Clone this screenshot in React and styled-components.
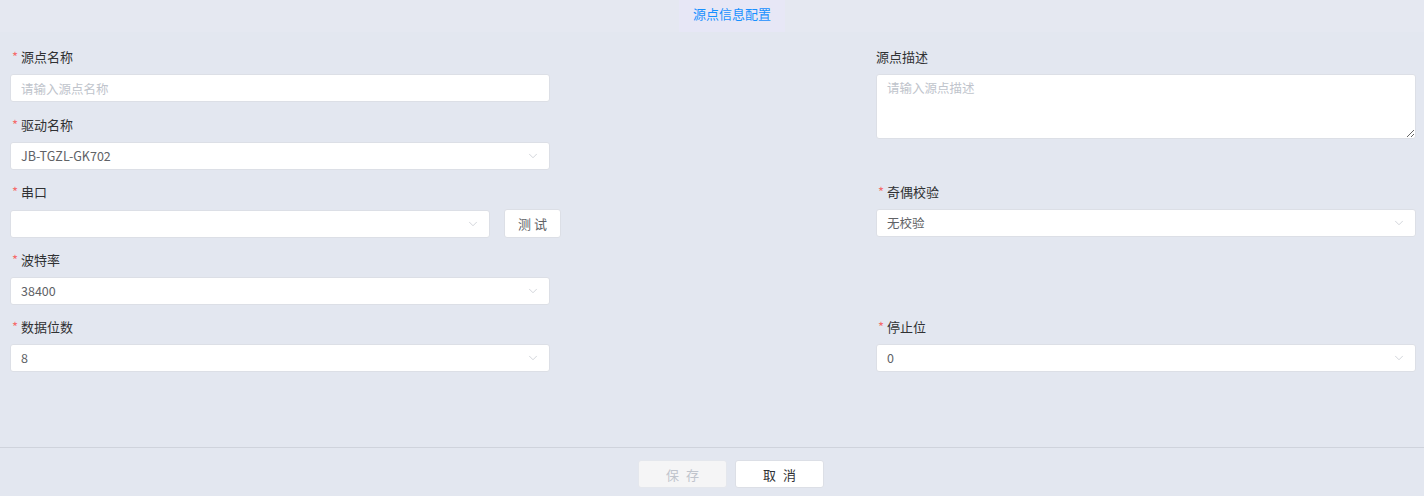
import React from "react";
import styled, { createGlobalStyle } from "styled-components";
import { ChevronDown } from "lucide-react";

const GlobalStyle = createGlobalStyle`
  html, body {
    margin: 0;
    padding: 0;
    background: #e3e7f0;
    font-family: "Noto Sans CJK SC", "Noto Sans", sans-serif;
  }
  * { box-sizing: border-box; }
`;

export default function App() {
  return (
    <Page>
      <GlobalStyle />
      <Header>
        <Tab>源点信息配置</Tab>
      </Header>
      <Form>
        <Item col={1}>
          <Label required>源点名称</Label>
          <Input placeholder="请输入源点名称" />
        </Item>
        <Item col={2} span={2}>
          <Label>源点描述</Label>
          <TextArea placeholder="请输入源点描述" />
        </Item>
        <Item col={1}>
          <Label required>驱动名称</Label>
          <Select value="JB-TGZL-GK702" />
        </Item>
        <Item col={1}>
          <Label required>串口</Label>
          <Inline>
            <Select value="" />
            <TestButton>测 试</TestButton>
          </Inline>
        </Item>
        <Item col={2}>
          <Label required>奇偶校验</Label>
          <Select value="无校验" />
        </Item>
        <Item col={1}>
          <Label required>波特率</Label>
          <Select value="38400" />
        </Item>
        <Item col={1}>
          <Label required>数据位数</Label>
          <Select value="8" />
        </Item>
        <Item col={2}>
          <Label required>停止位</Label>
          <Select value="0" />
        </Item>
      </Form>
      <Footer>
        <Button disabled>保 存</Button>
        <Button>取 消</Button>
      </Footer>
    </Page>
  );
}

function Select({ value }) {
  return (
    <SelectBox>
      <SelectText>{value}</SelectText>
      <ChevronDown size={14} strokeWidth={1.2} color="#c0c4cc" />
    </SelectBox>
  );
}

const Page = styled.div`
  height: 100vh;
  display: flex;
  flex-direction: column;
`;

const Header = styled.div`
  height: 32px;
  background: #e5e8f1;
  display: flex;
  justify-content: center;
  padding-left: 40px;
`;

const Tab = styled.div`
  width: 106px;
  background: #e7e7f6;
  color: #1890ff;
  font-size: 13px;
  text-align: center;
  line-height: 28px;
`;

const Form = styled.div`
  flex: 1;
  display: grid;
  grid-template-columns: 540px 540px;
  grid-auto-rows: 67.5px;
  justify-content: space-between;
  padding: 15px 8px 0 10px;
`;

const Item = styled.div`
  grid-column: ${(p) => p.col};
  grid-row: ${(p) => (p.span ? `span ${p.span}` : "auto")};
`;

const Label = styled.div`
  font-size: 13px;
  line-height: 20px;
  color: #303133;
  margin-bottom: 7px;

  &::before {
    content: ${(p) => (p.required ? '"*"' : "none")};
    color: #f56c6c;
    margin: 0 3px 0 2px;
  }
`;

const fieldBase = `
  width: 100%;
  background: #fff;
  border: 1px solid #dcdfe6;
  border-radius: 3px;
  font-family: "Noto Sans CJK SC", "Noto Sans", sans-serif;
  font-size: 12.5px;
  color: #606266;
  outline: none;
`;

const Input = styled.input`
  ${fieldBase}
  display: block;
  height: 28px;
  padding: 0 10px;

  &::placeholder { color: #c0c4cc; }
`;

const TextArea = styled.textarea`
  ${fieldBase}
  display: block;
  height: 65px;
  padding: 3px 10px;
  line-height: 20px;
  resize: vertical;

  &::placeholder { color: #c0c4cc; }
`;

const SelectBox = styled.div`
  ${fieldBase}
  height: 28px;
  padding: 0 9px 0 10px;
  display: flex;
  align-items: center;
  justify-content: space-between;
`;

const SelectText = styled.span`
  line-height: 26px;
`;

const Inline = styled.div`
  display: flex;
  align-items: center;
  gap: 14px;

  & > ${SelectBox} {
    flex: 1;
  }
`;

const TestButton = styled.button`
  flex: none;
  width: 57px;
  height: 29px;
  background: #fff;
  border: 1px solid #dcdfe6;
  border-radius: 3px;
  font-family: "Noto Sans CJK SC", "Noto Sans", sans-serif;
  font-size: 13px;
  color: #606266;
  padding: 0;
  margin-right: -11px;
`;

const Footer = styled.div`
  border-top: 1px solid #cfd3dc;
  display: flex;
  justify-content: center;
  gap: 8px;
  padding: 12px 0 8px 38px;
`;

const Button = styled.button`
  width: 89px;
  height: 28px;
  border-radius: 3px;
  border: 1px solid ${(p) => (p.disabled ? "#e4e7ed" : "#dcdfe6")};
  background: ${(p) => (p.disabled ? "#f5f5f6" : "#fff")};
  color: ${(p) => (p.disabled ? "#c0c4cc" : "#303133")};
  font-family: "Noto Sans CJK SC", "Noto Sans", sans-serif;
  font-size: 13px;
  letter-spacing: 2px;
  padding: 0 0 0 2px;
`;
